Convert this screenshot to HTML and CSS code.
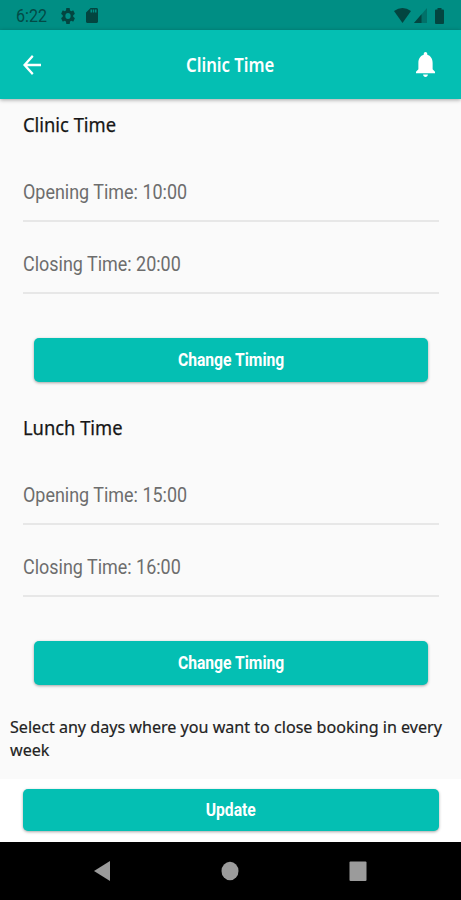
FILE: index.html
```html
<!DOCTYPE html>
<html lang="en">
<head>
<meta charset="utf-8">
<meta name="viewport" content="width=device-width, initial-scale=1">
<title>Clinic Time</title>
<link rel="stylesheet" href="styles.css">
</head>
<body>
<div class="phone">
  <div class="status">
    <span class="clock"><span class="fit">6:22</span></span>
    <svg class="gear" viewBox="2 2 20 20" preserveAspectRatio="none"><path d="M19.43 12.98c.04-.32.07-.64.07-.98s-.03-.66-.07-.98l2.11-1.65c.19-.15.24-.42.12-.64l-2-3.46c-.12-.22-.39-.3-.61-.22l-2.49 1c-.52-.4-1.08-.73-1.69-.98l-.38-2.65A.488.488 0 0 0 14 2h-4c-.25 0-.46.18-.49.42l-.38 2.65c-.61.25-1.17.59-1.69.98l-2.49-1c-.23-.09-.49 0-.61.22l-2 3.46c-.13.22-.07.49.12.64l2.11 1.65c-.04.32-.07.65-.07.98s.03.66.07.98l-2.11 1.65c-.19.15-.24.42-.12.64l2 3.46c.12.22.39.3.61.22l2.49-1c.52.4 1.08.73 1.69.98l.38 2.65c.03.24.24.42.49.42h4c.25 0 .46-.18.49-.42l.38-2.65c.61-.25 1.17-.59 1.69-.98l2.49 1c.23.09.49 0 .61-.22l2-3.46c.12-.22.07-.49-.12-.64l-2.11-1.65zM12 15.800a3.800 3.800 0 1 1 0-7.600 3.800 3.800 0 0 1 0 7.600z"/></svg>
    <svg class="card" viewBox="4 2 16 20" preserveAspectRatio="none"><path d="M18 2h-8L4.020 8 4 20c0 1.100.9 2 2 2h12c1.100 0 2-.9 2-2V4c0-1.100-.9-2-2-2zm-6 6h-2V4h2v4zm3 0h-2V4h2v4zm3 0h-2V4h2v4z"/></svg>
    <span class="spacer"></span>
    <svg class="wifi" viewBox="0 0 18 15" preserveAspectRatio="none"><path d="M0 3Q9-3 18 3L9 15z"/></svg>
    <svg class="signal" viewBox="0 0 13 15" preserveAspectRatio="none"><path opacity=".4" d="M0 15H13V0z"/><path d="M0 15H7.500V6.300z"/></svg>
    <svg class="battery" viewBox="0 0 9 16" preserveAspectRatio="none"><path d="M2.500 0h4v1.500H8Q9 1.500 9 2.500V15Q9 16 8 16H1Q0 16 0 15V2.500Q0 1.500 1 1.500h1.500z"/></svg>
  </div>
  <header class="appbar">
    <svg class="back" viewBox="4 4 16 16" preserveAspectRatio="none"><path d="M20 11H7.830l5.590-5.590L12 4l-8 8 8 8 1.410-1.410L7.830 13H20v-2z"/></svg>
    <h1 class="title"><span class="fit">Clinic Time</span></h1>
    <svg class="bell" viewBox="4 2.500 16 19.500" preserveAspectRatio="none"><path d="M12 22c1.100 0 2-.9 2-2h-4c0 1.100.89 2 2 2zm6-6v-5c0-3.070-1.640-5.640-4.500-6.320V4c0-.83-.67-1.500-1.500-1.500s-1.500.67-1.500 1.500v.68C7.630 5.360 6 7.920 6 11v5l-2 2v1h16v-1l-2-2z"/></svg>
  </header>
  <main class="content">
    <section class="group">
      <h2 class="heading"><span class="fit">Clinic Time</span></h2>
      <div class="field"><span class="fit">Opening Time: 10:00</span></div>
      <div class="field"><span class="fit">Closing Time: 20:00</span></div>
      <button class="btn change"><span class="fit">Change Timing</span></button>
    </section>
    <section class="group">
      <h2 class="heading"><span class="fit">Lunch Time</span></h2>
      <div class="field"><span class="fit">Opening Time: 15:00</span></div>
      <div class="field"><span class="fit">Closing Time: 16:00</span></div>
      <button class="btn change"><span class="fit">Change Timing</span></button>
    </section>
    <p class="note"><span class="fit">Select any days where you want to close booking in every<br>week</span></p>
  </main>
  <footer class="actions"><button class="btn update"><span class="fit">Update</span></button></footer>
  <nav class="nav">
    <svg viewBox="0 0 18 22"><path d="M17 1v20L1 11z"/></svg>
    <svg viewBox="0 0 18 22"><ellipse cx="9" cy="11" rx="8.500" ry="9.300"/></svg>
    <svg viewBox="0 0 18 22"><rect x=".5" y="1.500" width="17" height="19.500" rx="1"/></svg>
  </nav>
</div>
</body>
</html>
```
FILE: styles.css
```css
* { box-sizing: border-box; }
body { margin: 0; background: #fafafa; font-family: Roboto, sans-serif; }
.phone { display: flex; flex-direction: column; width: 461px; height: 900px; overflow: hidden; }
h1, h2, p { margin: 0; }
svg { display: block; flex: none; }
.fit { display: inline-block; white-space: nowrap; }

.status { display: flex; align-items: center; height: 30px; flex: none; padding: 1px 17px 0 16px; background: #008e84; color: #034a46; fill: #034540; }
.clock { width: 45px; font-size: 17.5px; line-height: 28px; padding-top: 1px; }
.clock .fit { transform-origin: left; transform: scaleX(.92); }
.gear { width: 14px; height: 16px; }
.card { width: 12px; height: 15px; margin-left: 11px; }
.spacer { flex: 1; }
.wifi { width: 17px; height: 15px; }
.signal { width: 13px; height: 15px; margin-left: 3px; }
.battery { width: 9px; height: 16px; margin: 0 0 0 8px; }

.appbar { display: flex; align-items: center; height: 69px; flex: none; padding: 0 26px 0 23px; background: #04bfb3; color: #fff; fill: #fff; box-shadow: 0 1px 4px rgba(0,0,0,.35); z-index: 1; }
.back { width: 18px; height: 20px; }
.title { flex: 1; text-align: center; font: 600 19px/26px "Noto Sans", sans-serif; padding: 1px 0 0 4px; }
.title .fit { transform: scaleX(.88); }
.bell { width: 19px; height: 25px; }

.content { flex: 1; }
.group { height: 302.5px; padding: 0 22px 0 23px; }
.heading { height: 51px; padding-top: 12px; font: 400 19.5px/27px "Noto Sans", sans-serif; color: #161616; -webkit-text-stroke: .25px #161616; }
.heading .fit { transform-origin: left; transform: scaleX(.94); }
.field { height: 72px; padding-top: 29px; border-bottom: 2px solid #e7e7e7; font-size: 20px; line-height: 27px; color: #6d6d6d; }
.field .fit { transform-origin: left; transform: scaleX(.897); }
.btn { display: flex; align-items: center; justify-content: center; padding: 0; border: 0; border-radius: 5px; background: #04bfb3; color: #fff; font: 700 18px/24px Roboto, sans-serif; box-shadow: 0 1px 3px rgba(0,0,0,.35); }
.btn .fit { transform: scaleX(.87); }
.change { width: 394px; height: 44px; margin: 44px 0 0 11px; }
.note { padding: 10.5px 10px; font: 400 17px/23.5px "Noto Sans", sans-serif; color: #222; -webkit-text-stroke: .2px #222; }
.note .fit { transform-origin: left; transform: scaleX(.947); }

.actions { height: 63px; flex: none; padding: 10px 22px 0 23px; background: #fff; }
.update { width: 416px; height: 42px; }
.nav { display: flex; align-items: center; justify-content: center; gap: 110px; height: 58px; flex: none; padding-right: 1px; background: #000; fill: #9b9b9b; }
.nav svg { width: 18px; height: 22px; }
```
